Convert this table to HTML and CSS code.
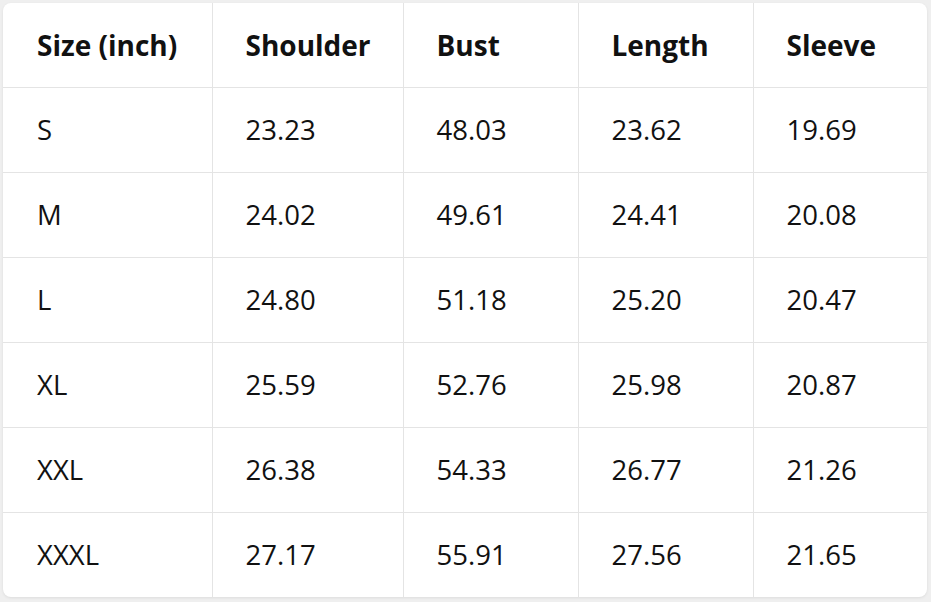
FILE: index.html
```html
<!DOCTYPE html>
<html lang="en">
<head>
<meta charset="utf-8">
<title>Size chart</title>
<link rel="stylesheet" href="styles.css">
</head>
<body>
<div class="card">
  <table class="size-table">
    <colgroup>
      <col class="c1"><col class="c2"><col class="c3"><col class="c4"><col class="c5">
    </colgroup>
    <thead>
      <tr><th>Size (inch)</th><th>Shoulder</th><th>Bust</th><th>Length</th><th>Sleeve</th></tr>
    </thead>
    <tbody>
      <tr><td>S</td><td>23.23</td><td>48.03</td><td>23.62</td><td>19.69</td></tr>
      <tr><td>M</td><td>24.02</td><td>49.61</td><td>24.41</td><td>20.08</td></tr>
      <tr><td>L</td><td>24.80</td><td>51.18</td><td>25.20</td><td>20.47</td></tr>
      <tr><td>XL</td><td>25.59</td><td>52.76</td><td>25.98</td><td>20.87</td></tr>
      <tr><td>XXL</td><td>26.38</td><td>54.33</td><td>26.77</td><td>21.26</td></tr>
      <tr><td>XXXL</td><td>27.17</td><td>55.91</td><td>27.56</td><td>21.65</td></tr>
    </tbody>
  </table>
</div>
</body>
</html>
```
FILE: styles.css
```css
html, body {
  margin: 0;
  padding: 0;
  background: #efefef;
}
body {
  padding: 3px 4px 5px 3px;
  font-family: "Open Sans", "Noto Sans", sans-serif;
  color: #111;
}
.card {
  width: 924px;
  height: 594px;
  background: #fff;
  border-radius: 8px;
  box-shadow: 0 1px 3px rgba(0,0,0,0.08);
  overflow: hidden;
}
.size-table {
  width: 924px;
  border-collapse: collapse;
  table-layout: fixed;
}
.c1 { width: 209px; }
.c2 { width: 191px; }
.c3 { width: 175px; }
.c4 { width: 175px; }
.c5 { width: 174px; }
.size-table th,
.size-table td {
  padding: 0 0 0 33px;
  text-align: left;
  vertical-align: middle;
  border-right: 1px solid #e4e4e4;
  border-bottom: 1px solid #e4e4e4;
  font-size: 27.5px;
}
.size-table th:first-child,
.size-table td:first-child { padding-left: 34px; }
.size-table th:last-child,
.size-table td:last-child { border-right: none; }
.size-table tbody tr:last-child td { border-bottom: none; }
.size-table th {
  height: 84px;
  font-size: 28px;
  font-weight: 700;
  box-sizing: border-box;
}
.size-table td {
  height: 85px;
  font-weight: 400;
  box-sizing: border-box;
}
```
